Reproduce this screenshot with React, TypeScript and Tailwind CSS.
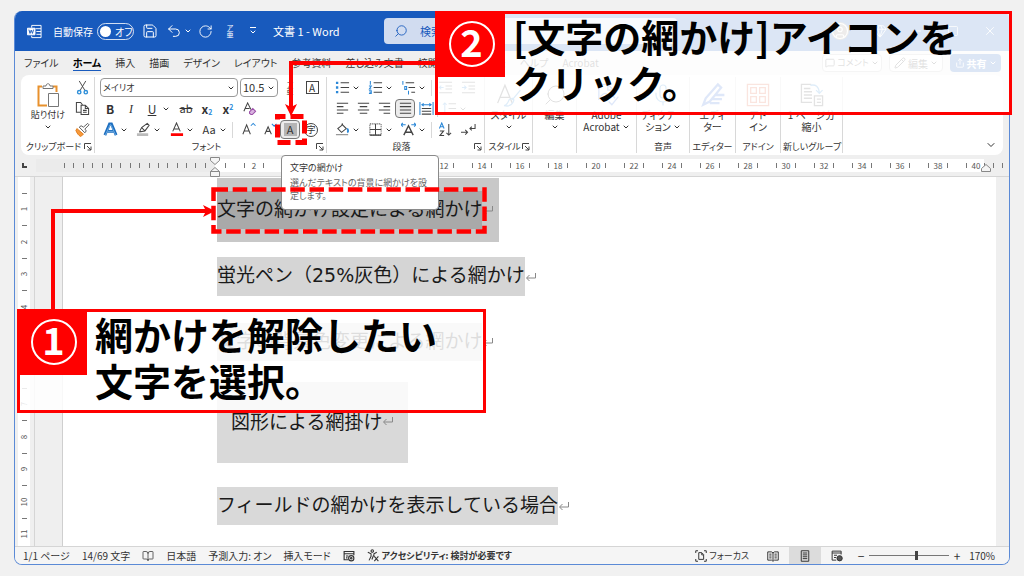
import React from 'react';
import { ChevronDown, Search, Save, Undo2, RotateCw, Minus, Square, X, Gem, MessageSquare, Pencil, Share, BookOpen, CircleUser, Mic } from 'lucide-react';

const TABS = ['ファイル', 'ホーム', '挿入', '描画', 'デザイン', 'レイアウト', '参考資料', '差し込み文書', '校閲', '表示', '開発', 'ヘルプ', 'Acrobat'];
const H_MARKS = Array.from({ length: 20 }, (_, i) => (i + 1) * 2);
const V_MARKS = [1, 3, 5, 7, 9, 11];

const Chev = () => <ChevronDown className="w-2 h-2 shrink-0" strokeWidth={3} />;

const Svg: React.FC<{ size?: 'sm' | 'lg'; children: React.ReactNode }> = ({ size = 'sm', children }) => (
  <svg
    viewBox="0 0 16 16"
    fill="none"
    stroke="#444"
    strokeWidth={size === 'lg' ? 0.8 : 1.1}
    className={size === 'lg' ? 'w-[26px] h-[26px]' : 'w-[15px] h-[15px]'}
  >
    {children}
  </svg>
);

const Tool: React.FC<{ name: string; menu?: boolean; active?: boolean; children: React.ReactNode }> = ({ name, menu, active, children }) => (
  <button aria-label={name} className={`flex h-[19px] items-center ${menu ? 'w-[30px]' : 'w-5'}`}>
    <span
      className={`flex h-[19px] w-5 shrink-0 items-center justify-center ${active ? 'rounded border border-[#777] bg-[#ececec]' : ''}`}
    >
      {children}
    </span>
    {menu && <Chev />}
  </button>
);

const Sep = () => <span className="h-4 w-px bg-[#d8d8d8]" />;

const Launcher = () => (
  <button aria-label="詳細" className="flex">
    <svg viewBox="0 0 8 8" fill="none" stroke="#444" className="w-2 h-2">
      <path d="M.5 6V.5H7M3 3l4 4M7 3.5V7H3.5" />
    </svg>
  </button>
);

const Group: React.FC<{ label?: string; launcher?: boolean; width: string; children: React.ReactNode }> = ({ label, launcher, width, children }) => (
  <section className={`my-0.5 flex shrink-0 flex-col border-r border-[#d8d8d8] ${width}`}>
    <div className="h-[63px]">{children}</div>
    <div className="flex h-[13px] items-center whitespace-nowrap px-0.5 text-[9px]">
      <span className="flex-1 text-center">{label}</span>
      {launcher && <Launcher />}
    </div>
  </section>
);

const BigButton: React.FC<{ icon: React.ReactNode; lines: string[]; menu?: boolean; below?: boolean }> = ({ icon, lines, menu, below }) => (
  <button className="flex w-full flex-col items-center pt-1 leading-3 whitespace-nowrap">
    <span className="flex h-7 items-center">{icon}</span>
    {lines.map((line, i) => (
      <span key={line} className="flex items-center gap-0.5">
        {line}
        {menu && !below && i === lines.length - 1 && <Chev />}
      </span>
    ))}
    {below && <span className="flex h-3 items-center"><Chev /></span>}
  </button>
);

const Lines: React.FC<{ rows: [number, number][] }> = ({ rows }) => (
  <Svg>
    {rows.map(([from, to], i) => (
      <path key={i} d={`M${from} ${2.5 + i * 3.5}H${to}`} />
    ))}
  </Svg>
);

const TitleBar = () => (
  <header className="flex h-10 shrink-0 items-center whitespace-nowrap bg-[#185abd] pl-3 text-white">
    <svg viewBox="0 0 16 16" fill="none" stroke="white" className="w-[15px] h-[15px]">
      <path d="M5 4V1.500h10v13H5v-2M9 5h6M10 8h5M10 11h5" />
      <path d="M.5 4.500h8v7h-8z" fill="white" />
      <path d="M2 6l1.200 4L4.500 6.500 5.800 10 7 6" stroke="#185abd" />
    </svg>
    <label className="ml-[11px] flex items-center gap-1 text-[10px]">
      自動保存
      <input type="checkbox" role="switch" className="sr-only" />
      <span className="flex h-[17px] w-[37px] items-center gap-1 rounded-full border border-white/80 px-0.5">
        <span className="h-[11px] w-[11px] shrink-0 rounded-full bg-white" />
        オフ
      </span>
    </label>
    <button aria-label="保存" className="ml-2"><Save className="w-4 h-4" strokeWidth={1.5} /></button>
    <button aria-label="元に戻す" className="ml-2 flex items-center gap-0.5"><Undo2 className="w-4 h-4" strokeWidth={1.5} /><Chev /></button>
    <button aria-label="繰り返し" className="ml-1.5"><RotateCw className="w-[15px] h-[15px]" strokeWidth={1.5} /></button>
    <button aria-label="ルビ" className="ml-3 flex w-2.5 flex-col text-[7px] leading-[7px]"><span>ア</span><span>亜</span></button>
    <button aria-label="クイックアクセスのカスタマイズ" className="ml-3.5 flex flex-col items-center">
      <span className="h-px w-1.5 bg-white" />
      <Chev />
    </button>
    <h1 className="ml-4 w-[111px] text-[11px]">文書 1 - Word</h1>
    <label className="flex h-[26px] w-[293px] items-center gap-3 rounded-sm bg-[#d1dcf0] pl-2.5 text-[#185abd]">
      <Search className="w-3.5 h-3.5 -scale-x-100" strokeWidth={1.5} />
      <input aria-label="検索" placeholder="検索" className="min-w-0 flex-1 bg-transparent text-[11px] placeholder:text-[#185abd] outline-none" />
    </label>
    <div className="ml-auto flex items-center gap-6 pr-3">
      <CircleUser className="w-[18px] h-[18px] rounded-full bg-[#8b8378]" strokeWidth={1.5} />
      <Gem className="w-3.5 h-3.5" strokeWidth={1.5} />
      <Minus className="w-3 h-3" strokeWidth={1.5} />
      <Square className="w-3 h-3" strokeWidth={1.5} />
      <X className="w-3.5 h-3.5" strokeWidth={1.5} />
    </div>
  </header>
);

const TabRow = () => (
  <nav className="flex h-6 shrink-0 items-center pl-[9px] pr-2">
    <div className="flex gap-3.5 whitespace-nowrap">
      {TABS.map((tab) => (
        <button key={tab} className={tab === 'ホーム' ? 'border-b border-[#185abd] font-bold text-black' : 'border-b border-transparent'}>
          {tab}
        </button>
      ))}
    </div>
    <div className="ml-auto flex gap-[7px] whitespace-nowrap">
      <button className="flex h-[18px] w-[60px] items-center justify-center gap-0.5 rounded-sm border border-[#bbb] bg-white text-[9px]"><MessageSquare className="w-2.5 h-2.5" />コメント<Chev /></button>
      <button className="flex h-[18px] w-[54px] items-center justify-center gap-0.5 rounded-sm border border-[#bbb] bg-white"><Pencil className="w-3 h-3" />編集<Chev /></button>
      <button className="flex h-[18px] w-[51px] items-center justify-center gap-0.5 rounded-sm bg-[#185abd] font-bold text-white"><Share className="w-2.5 h-2.5" />共有<Chev /></button>
    </div>
  </nav>
);

const ClipboardGroup = () => (
  <Group label="クリップボード" launcher width="w-[74px]">
    <div className="flex">
      <button className="flex w-[54px] flex-col items-center pt-1 text-[9px] leading-3">
        <svg viewBox="0 0 24 26" fill="none" className="h-7 w-6">
          <path d="M6 4.500H2.500v19H11M17 4.500h3.500V10" stroke="#e8912d" strokeWidth="2" />
          <path d="M7 6.500V4h3c0-3 4-3 4 0h3v2.500z" stroke="#777" fill="white" />
          <path d="M12.500 11.500h10v13h-10z" stroke="#777" fill="white" />
        </svg>
        貼り付け
        <span className="flex h-3 items-center"><Chev /></span>
      </button>
      <div className="flex flex-col">
        <button aria-label="切り取り" className="flex h-[21px] items-center">
          <svg viewBox="0 0 16 16" fill="none" className="h-[15px] w-[15px]">
            <path d="M4.500 1l6 10M11.500 1l-6 10" stroke="#444" />
            <circle cx="4.500" cy="13" r="1.800" stroke="#2f8fd8" strokeWidth="1.500" />
            <circle cx="11.500" cy="13" r="1.800" stroke="#2f8fd8" strokeWidth="1.500" />
          </svg>
        </button>
        <button aria-label="コピー" className="flex h-[21px] items-center">
          <Svg><path d="M6 12H1.500V1.500H6L8 4M6.500 4.500H11l3.500 3.500v6.500h-8zM11 5v3h3M8.500 10h4M8.500 12h4" /></Svg>
        </button>
        <button aria-label="書式のコピー" className="flex h-[21px] items-center">
          <svg viewBox="0 0 16 16" fill="none" className="h-[15px] w-[15px]">
            <path d="M2 7l7 6-3 2.500C3.500 14 2 12 1 9z" fill="#f79a3c" stroke="#e07b1a" />
            <path d="M4.500 5.500l6 6 1.500-2-1.500-2L15 3l-1.500-1.500L9 5.500 6.500 4z" stroke="#555" fill="white" />
          </svg>
        </button>
      </div>
    </div>
  </Group>
);

const FontGroup = () => (
  <Group label="フォント" launcher width="w-[232px]">
    <div className="flex h-[21px] items-center gap-0.5 pl-[5px]">
      <div className="flex h-[19px] w-[138px] items-center rounded border border-[#999] px-0.5">
        <select aria-label="フォント" className="min-w-0 flex-1 appearance-none bg-transparent text-[9px]"><option>メイリオ</option></select>
        <Chev />
      </div>
      <div className="flex h-[19px] w-[38px] items-center rounded border border-[#999] px-0.5">
        <select aria-label="フォント サイズ" className="min-w-0 flex-1 appearance-none bg-transparent text-[11px]"><option>10.5</option></select>
        <Chev />
      </div>
      <Tool name="ルビ"><span className="flex flex-col text-[7px] leading-[7px]"><span>ア</span><span>亜</span></span></Tool>
      <Tool name="囲み線"><span className="h-[13px] w-[13px] border border-[#444] text-center text-[10px] leading-[11px]">A</span></Tool>
    </div>
    <div className="flex h-[21px] items-center gap-px pl-[5px] text-[12px]">
      <Tool name="太字"><b>B</b></Tool>
      <Tool name="斜体"><i className="font-['Liberation_Serif',serif]">I</i></Tool>
      <Tool name="下線" menu><u>U</u></Tool>
      <span className="w-0.5" />
      <Tool name="取り消し線"><s className="text-[11px]">ab</s></Tool>
      <Tool name="下付き"><span className="font-bold">x<sub className="text-[7px] text-[#2b88d8]">2</sub></span></Tool>
      <Tool name="上付き"><span className="font-bold">x<sup className="text-[7px] text-[#2b88d8]">2</sup></span></Tool>
      <Tool name="書式のクリア">
        <Svg><path d="M2 11L6 2l3.500 7M3.500 8H8" /><path d="M8 11.500l3.500-3.500 3 3L11 14.500H9.500L8 13z" fill="#d9b3e0" stroke="#9b4fa8" /></Svg>
      </Tool>
    </div>
    <div className="flex h-[21px] items-center gap-[3px] pl-[5px] text-[11px]">
      <Tool name="文字の効果" menu>
        <Svg><path d="M2 14L7 2h2l5 12M5 10h6" stroke="#1e6fc0" strokeWidth="3" /><path d="M2.500 14L7.500 3h1l5 11M5 10h6" stroke="#8fc4f0" strokeWidth="0.700" /></Svg>
      </Tool>
      <Tool name="蛍光ペン" menu>
        <Svg><path d="M4 10l2-4 6-4.500 2 2L9.500 9.500 4 10.500zM6 6l3.500 3.500" /><path d="M1 13.500h12" stroke="#bbb" strokeWidth="3" /></Svg>
      </Tool>
      <Tool name="フォントの色" menu>
        <Svg><path d="M4 10L8 1l4 9M5.500 7.500h5" /><path d="M2 13.500h13" stroke="red" strokeWidth="3" /></Svg>
      </Tool>
      <Tool name="文字種の変換" menu>Aa</Tool>
      <Sep />
      <div className="flex gap-px pl-0.5">
        <Tool name="フォントの拡大">
          <Svg><path d="M2 13L6 3l4 10M3.500 9.500h5" /><path d="M10.500 4L13 1.500 15.500 4" stroke="#2b88d8" /></Svg>
        </Tool>
        <Tool name="フォントの縮小">
          <Svg><path d="M3 13l3.500-8L10 13M4.500 10h4" /><path d="M10.500 2L13 4.500 15.500 2" stroke="#2b88d8" /></Svg>
        </Tool>
        <Tool name="文字の網かけ" active><span className="h-[13px] w-[13px] bg-[#b5b5b5] text-center leading-[13px]">A</span></Tool>
        <Tool name="囲い文字"><span className="h-[14px] w-[14px] rounded-full border border-[#444] text-center text-[9px] leading-3">字</span></Tool>
      </div>
    </div>
  </Group>
);

const ParagraphGroup = () => (
  <Group label="段落" launcher width="w-[158px]">
    <div className="flex h-[21px] items-center gap-[3px] pl-[5px]">
      <Tool name="箇条書き" menu>
        <Svg><path d="M6 3h9M6 8h9M6 13h9" /><path d="M1 3h2.500M1 8h2.500M1 13h2.500" stroke="#2b88d8" strokeWidth="2.500" /></Svg>
      </Tool>
      <Tool name="段落番号" menu>
        <Svg><path d="M6 3h9M6 8h9M6 13h9" /><path d="M2.500 1v4M1 6.500h2.500L1.500 9.500h2M1 11.500h2.500v3H1M1.500 13h2" stroke="#2b88d8" /></Svg>
      </Tool>
      <Tool name="アウトライン" menu>
        <Svg><path d="M5 3h9M8 8h7M11 13h4" /><path d="M2 1v4M4 7h2v3H4zM8 11.500v4" stroke="#2b88d8" /></Svg>
      </Tool>
      <Sep />
      <Tool name="インデントを減らす">
        <Svg><path d="M1 2.500h14M8 6.500h7M8 9.500h7M1 13.500h14" /><path d="M6 8H1.500M3.500 6l-2 2 2 2" stroke="#2b88d8" /></Svg>
      </Tool>
      <Tool name="インデントを増やす">
        <Svg><path d="M1 2.500h14M8 6.500h7M8 9.500h7M1 13.500h14" /><path d="M1 8h4.500M3.500 6l2 2-2 2" stroke="#2b88d8" /></Svg>
      </Tool>
    </div>
    <div className="flex h-[21px] items-center gap-px pl-[5px]">
      <Tool name="左揃え"><Lines rows={[[2, 14], [2, 9], [2, 14], [2, 9]]} /></Tool>
      <Tool name="中央揃え"><Lines rows={[[2, 14], [4, 12], [2, 14], [4, 12]]} /></Tool>
      <Tool name="右揃え"><Lines rows={[[2, 14], [7, 14], [2, 14], [7, 14]]} /></Tool>
      <Tool name="両端揃え" active><Lines rows={[[2, 14], [2, 14], [2, 14], [2, 14]]} /></Tool>
      <Tool name="均等割り付け">
        <Svg><path d="M3 8h10M3 11h10M3 14h10" /><path d="M1 1v14M15 1v14M3 4h10M5 2.500L3 4l2 1.500M11 2.500L13 4l-2 1.500" stroke="#2b88d8" /></Svg>
      </Tool>
      <Sep />
      <Tool name="行間" menu>
        <Svg><path d="M7 3h8M7 8h8M7 13h8" /><path d="M3 2v12M1 4l2-2 2 2M1 12l2 2 2-2" stroke="#2b88d8" /></Svg>
      </Tool>
    </div>
    <div className="flex h-[21px] items-center gap-[3px] pl-[5px]">
      <Tool name="塗りつぶし" menu>
        <Svg><path d="M7 2l5 5-5 4-4-4 5-4V1.500" /><path d="M13 7q2 3 0 4" stroke="#2b88d8" strokeWidth="2" /><path d="M1 13.500h13" stroke="#999" strokeWidth="1.500" /></Svg>
      </Tool>
      <Tool name="罫線" menu>
        <Svg><path d="M2 2h12v12H2z" strokeDasharray="1 1" /><path d="M8 2v12M2 8h12M2 14h12" /></Svg>
      </Tool>
      <Tool name="拡張書式" menu>
        <Svg><path d="M3 14L8 4l5 10M5 11h6" strokeWidth="1.500" /><path d="M0 3h5M2 1L0 3l2 2M11 3h5M14 1l2 2-2 2" stroke="#2b88d8" /></Svg>
      </Tool>
      <Sep />
      <Tool name="並べ替え">
        <Svg><path d="M1.500 7L4 1l2.500 6M2.500 5h3" stroke="#2b88d8" /><path d="M2 9.500h4L2 14.500h4.500M11.500 2v12M9 11.500l2.500 2.500 2.500-2.500" /></Svg>
      </Tool>
      <Tool name="編集記号の表示">
        <Svg><path d="M0 11h7M4.500 8.500L7 11l-2.500 2.500M15 2v5H9.500M11.500 5l-2 2 2 2" /></Svg>
      </Tool>
    </div>
  </Group>
);

const Ribbon = () => (
  <div className="mx-1.5 flex h-20 shrink-0 rounded-lg bg-white">
    <ClipboardGroup />
    <FontGroup />
    <ParagraphGroup />
    <Group label="スタイル" launcher width="w-[48px]">
      <BigButton
        icon={<Svg size="lg"><path d="M1 13L5.500 2 10 13M2.500 9.500h6" /><path d="M15 5l-5 6M10 10l-2 1q-1 3-3 3.500 4 1 5.500-2l.5-1.500z" stroke="#2b88d8" /></Svg>}
        lines={['スタイル']}
        menu
        below
      />
    </Group>
    <Group width="w-[44px]">
      <BigButton icon={<Search className="w-6 h-6 -scale-x-100" strokeWidth={1} />} lines={['編集']} menu below />
    </Group>
    <Group width="w-[60px]">
      <BigButton
        icon={<Svg size="lg"><path d="M3 11V1.500h5.500L12 5v3M8.500 2v3H12" stroke="#2b64d8" /><path d="M7 12l4-4 2 2M15 9l-4 5-2-2M4 9q3-4 5 0" stroke="#2b64d8" /></Svg>}
        lines={['Adobe', 'Acrobat']}
        menu
      />
    </Group>
    <Group label="音声" width="w-[53px]">
      <BigButton icon={<Mic className="w-6 h-6 text-[#2b88d8]" strokeWidth={1.2} />} lines={['ディクテー', 'ション']} menu />
    </Group>
    <Group label="エディター" width="w-[46px]">
      <BigButton
        icon={<Svg size="lg"><path d="M2 14l1.500-4L11 1.500l2 2L6 12zM9 8h6M7.500 10.500h6M6 13h6" stroke="#2b64d8" strokeWidth="1.400" /></Svg>}
        lines={['エディ', 'ター']}
      />
    </Group>
    <Group label="アドイン" width="w-[45px]">
      <BigButton
        icon={<Svg size="lg"><path d="M1.500 1.500h13v13h-13zM3.500 3.500h3.500v3.500H3.500zM9 3.500h3.500v3.500H9zM3.500 9h3.500v3.500H3.500zM9 9h3.500v3.500H9z" stroke="#e0532c" /></Svg>}
        lines={['アド', 'イン']}
      />
    </Group>
    <Group label="新しいグループ" width="w-[62px]">
      <BigButton
        icon={<Svg size="lg"><path d="M8 12.500H1.500v-11h6M3 4h4M3 6h5M3 8h5M3 10h5M9.500 8.500h5v6h-5zM11 10.500h2.500M11 12.500h2.500" /><path d="M7 2q5-1 5.500 4.500M10.500 5l2 2 2-2" stroke="#2b88d8" /></Svg>}
        lines={['1 ページ分', '縮小']}
      />
    </Group>
    <button aria-label="リボンを折りたたむ" className="ml-auto self-end pb-1 pr-1.5">
      <ChevronDown className="w-3 h-3" strokeWidth={2} />
    </button>
  </div>
);

const Tick = () => <span className="h-[5px] w-px bg-[#777]" />;

const HorizontalRuler = () => (
  <div className="flex h-[22px] shrink-0 items-center border-b border-[#d5d5d5] text-[8px] text-[#555]">
    <span className="w-[21px] pl-[7px]"><span className="block h-[5px] w-[5px] border-b-2 border-l-2 border-[#444]" /></span>
    <div className="flex h-[13px] w-[179px] shrink-0 items-center justify-between bg-[#ebebeb] pl-7 pr-[9px]">
      {Array.from({ length: 16 }, (_, i) => <Tick key={i} />)}
    </div>
    <div className="flex h-[13px] min-w-0 flex-1 items-center overflow-hidden bg-white">
      <span className="flex w-5 shrink-0 justify-center"><Tick /></span>
      {H_MARKS.map((n) => (
        <span key={n} className="flex w-[38px] shrink-0 items-center px-[9px]">
          <Tick />
          <span className="flex-1 text-center">{n}</span>
          <Tick />
        </span>
      ))}
    </div>
    <div className="flex w-[25px] shrink-0 gap-2"><Tick /><Tick /><Tick /></div>
  </div>
);

const VerticalRuler = () => (
  <div className="mr-1 ml-[3px] w-3 shrink-0 overflow-hidden bg-white pt-2 text-[8px] text-[#555]">
    {V_MARKS.map((n) => (
      <div key={n} className="flex h-[65px] flex-col items-center justify-around">
        <span className="flex h-4 items-center"><span className="h-px w-[5px] bg-[#777]" /></span>
        <span className="flex h-4 -rotate-90 items-center">{n}</span>
        <span className="flex h-4 items-center"><span className="h-px w-[5px] bg-[#777]" /></span>
        <span className="flex h-4 -rotate-90 items-center">{n < 11 && n + 1}</span>
      </div>
    ))}
  </div>
);

const Mark = () => (
  <svg viewBox="0 0 12 12" fill="none" stroke="#888" className="w-3 h-3 shrink-0">
    <path d="M10.500 2v5H2M4.500 4L1.500 7l3 3" />
  </svg>
);

const Document = () => (
  <main className="min-w-0 flex-1 overflow-hidden whitespace-nowrap border-l border-[#cfcfcf] bg-white pl-[154px] text-[19px] leading-[34px] text-[#1a1a1a]">
    <p className="mt-px flex h-16 w-[282px] items-center bg-[#c8c8c8]">
      <span className="bg-[#a9a9a9] pb-1">文字の網かけ設定による網かけ</span><Mark />
    </p>
    <p className="mt-[15px] flex items-center">
      <span className="bg-[#d5d5d5] pb-1">蛍光ペン（<span className="font-['DejaVu_Sans',sans-serif]">25%</span>灰色）による網かけ</span><Mark />
    </p>
    <p className="mt-[27px] flex items-center"><span className="bg-[#d8d8d8] pb-1">文字の背景色変更による網かけ</span><Mark /></p>
    <p className="mt-[21px] flex h-[81px] w-[191px] items-center bg-[#d9d9d9] pb-1 pl-3.5">図形による網掛け<Mark /></p>
    <p className="mt-6 flex items-center"><span className="bg-[#d9d9d9] pb-1">フィールドの網かけを表示している場合</span><Mark /></p>
  </main>
);

const StatusBar = () => (
  <footer className="flex h-[18px] shrink-0 items-center whitespace-nowrap border-t border-[#d5d5d5] bg-[#f5f5f5] pl-2 pr-3.5">
    <div className="flex items-center gap-3">
      <span>1/1 ページ</span>
      <span>14/69 文字</span>
      <BookOpen className="w-3 h-3" strokeWidth={1.5} />
      <span>日本語</span>
      <span>予測入力: オン</span>
      <span>挿入モード</span>
      <svg viewBox="0 0 16 16" fill="none" stroke="#333" strokeWidth="1.500" className="h-3 w-3">
        <path d="M7 13H1.500V2h13v5M1.500 5h13M4 8h3M4 10.500h2" />
        <circle cx="11" cy="11" r="3.500" /><circle cx="11" cy="11" r="1" />
      </svg>
      <span className="flex items-center gap-0.5 text-[9px] font-bold">
        <svg viewBox="0 0 16 16" fill="none" stroke="#333" strokeWidth="1.300" className="h-[13px] w-[13px]">
          <circle cx="6.500" cy="2.500" r="1.500" />
          <path d="M1 4l4 2v3l-2.500 5M12 4L8.500 6v3M8 8l-2 5M9 9l5 6M14 9l-5 6" />
        </svg>
        アクセシビリティ: 検討が必要です
      </span>
    </div>
    <div className="ml-auto flex items-center">
      <button className="flex items-center gap-0.5 pr-2 text-[9px]">
        <svg viewBox="0 0 16 16" fill="none" stroke="#333" strokeWidth="1.300" className="h-3 w-3">
          <path d="M1 4V1h3M12 1h3v3M1 12v3h3M12 15h3v-3M5 3.500h4L11.500 6v6.500H5zM9 4v2.500h2" />
        </svg>
        フォーカス
      </button>
      <button aria-label="閲覧モード" className="flex w-8 justify-center">
        <svg viewBox="0 0 16 16" fill="none" stroke="#333" strokeWidth="1.300" className="h-3 w-3">
          <path d="M8 3v11M1 2.500h5L8 4l2-1.500h5v11H10L8 15l-2-1.500H1zM3 5.500h3M3 8h3M3 10.500h3M10 5.500h3M10 8h3M10 10.500h3" />
        </svg>
      </button>
      <button aria-label="印刷レイアウト" className="flex h-[17px] w-8 items-center justify-center bg-[#dcdcdc]">
        <svg viewBox="0 0 16 16" fill="none" stroke="#333" strokeWidth="1.300" className="h-3 w-3">
          <path d="M3 1h10v14H3zM5 4h6M5 6.500h6M5 9h6M5 11.500h6" />
        </svg>
      </button>
      <button aria-label="Web レイアウト" className="flex w-8 justify-center">
        <svg viewBox="0 0 16 16" fill="none" stroke="#333" strokeWidth="1.300" className="h-3 w-3">
          <path d="M7 13.500H1.500v-12h12V6M1.500 4h12M4 7h4M4 10h3" /><circle cx="11.500" cy="11" r="3.500" fill="#555" />
        </svg>
      </button>
      <button aria-label="縮小" className="w-4 text-[12px] leading-4">−</button>
      <input
        type="range"
        aria-label="ズーム"
        min={0}
        max={100}
        defaultValue={59}
        className="h-2.5 w-20 appearance-none bg-transparent [&::-webkit-slider-runnable-track]:h-px [&::-webkit-slider-runnable-track]:bg-[#777] [&::-webkit-slider-thumb]:-mt-1 [&::-webkit-slider-thumb]:h-[9px] [&::-webkit-slider-thumb]:w-[3px] [&::-webkit-slider-thumb]:appearance-none [&::-webkit-slider-thumb]:bg-[#444]"
      />
      <button aria-label="拡大" className="w-4 text-[12px] leading-4">+</button>
      <span className="pl-1">170%</span>
    </div>
  </footer>
);

const Callout: React.FC<{ n: number; place: string; children: React.ReactNode }> = ({ n, place, children }) => (
  <div className={`absolute flex h-[104px] border-[3px] border-[#f00] bg-white/85 ${place}`}>
    <div className="flex h-[63px] w-[67px] shrink-0 items-center justify-center bg-[#f00] pb-1">
      <span className="flex h-[46px] w-[46px] items-center justify-center rounded-full border-2 border-white pb-1.5 text-[38px] leading-none font-bold text-white">
        {n}
      </span>
    </div>
    <p className="-mt-px whitespace-nowrap pl-2 text-[38px] leading-[46px] font-bold text-black">{children}</p>
  </div>
);

const App: React.FC = () => {
  return (
    <div className="relative flex h-screen flex-col bg-[#f1f1f1] px-3.5 pt-[11px] pb-[11px] font-['Noto_Sans_CJK_JP',sans-serif]">
      <div className="flex min-h-0 flex-1 flex-col overflow-hidden rounded-lg border-x border-b border-[#5b8ad6] bg-[#efefef] text-[10px] text-[#333]">
        <div className="flex shrink-0 flex-col [font-feature-settings:'palt']">
          <TitleBar />
          <TabRow />
          <Ribbon />
        </div>
        <HorizontalRuler />
        <div className="flex min-h-0 flex-1">
          <VerticalRuler />
          <div className="w-7 shrink-0 border-l border-[#d5d5d5]" />
          <Document />
          <div className="w-[13px] shrink-0" />
        </div>
        <div className="[font-feature-settings:'palt']">
          <StatusBar />
        </div>
      </div>

      {/* Indent markers on the ruler */}
      <svg className="pointer-events-none absolute inset-0 h-full w-full" fill="#f5f5f5" stroke="#888">
        <path d="M210.500 157.500h9v3l-4.500 4-4.500-4zM210.500 176.500v-5l4.500-4 4.500 4v5zM210.500 171.500h9M981.500 171.500v-3l4.500-4 4.500 4v3z" />
      </svg>

      <div
        role="tooltip"
        className="absolute top-[155px] left-[281px] h-[55px] w-[158px] rounded border border-[#8a8a8a] bg-white px-2 pt-[5px] text-[9px] leading-[13px] text-[#666] [font-feature-settings:'palt']"
      >
        <p className="mb-0.5 text-[#333]">文字の網かけ</p>
        <p className="whitespace-nowrap">選んだテキストの背景に網かけを設<br />定します。</p>
      </div>

      {/* Arrows and dashed frames */}
      <svg className="pointer-events-none absolute inset-0 h-full w-full" fill="none" stroke="#f00" strokeWidth="4">
        <path d="M53 310V211H208" />
        <path d="M436 63H291V108" />
        <path d="M203 205l12 6-12 6 3-6zM285 104l6 12 6-12-6 3z" fill="#f00" stroke="none" />
        <rect x="213.500" y="189.500" width="271" height="42" strokeWidth="4.500" strokeDasharray="14.500 4.700" />
        <rect x="277.500" y="116.500" width="27" height="26" strokeWidth="5" strokeDasharray="13 5" strokeDashoffset="5" />
      </svg>

      <Callout n={2} place="left-[435px] top-[11px] w-[577px]">
        [文字の網かけ]アイコンを<br />クリック。
      </Callout>
      <Callout n={1} place="left-[17px] top-[309px] w-[469px]">
        網かけを解除したい<br />文字を選択。
      </Callout>
    </div>
  );
};

export default App;
